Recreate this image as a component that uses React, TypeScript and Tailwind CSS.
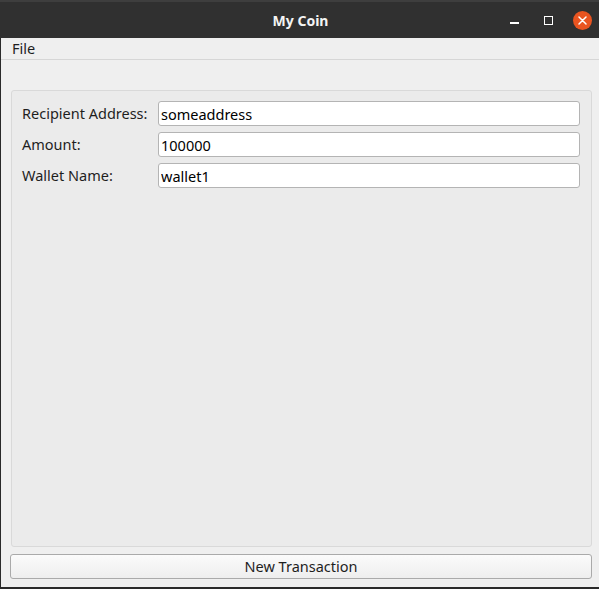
import React from 'react';

const font = { fontFamily: '"Noto Sans", "DejaVu Sans", sans-serif' };

function Field({ label, value }: { label: string; value: string }) {
  return (
    <div className="flex items-center h-[25px]">
      <span className="w-[136px] text-[14.5px] text-[#1e1e1e] leading-none">{label}</span>
      <input
        readOnly
        value={value}
        className="flex-1 h-[25px] bg-white border border-[#b4b4b4] rounded-[3px] px-[2px] text-[14.5px] text-black outline-none"
        style={font}
      />
    </div>
  );
}

export default function App() {
  return (
    <div className="w-[599px] h-[589px] flex flex-col bg-[#efefef] overflow-hidden" style={font}>
      {/* title bar */}
      <div className="h-[38px] bg-[#303030] border-t-2 border-[#3e3e3e] flex items-center relative shrink-0">
        <span className="absolute left-0 right-0 text-center text-[14px] font-bold text-[#f4f4f4] pl-[2px]">My Coin</span>
        <div className="ml-auto flex items-center h-full relative">
          <div className="w-[9px] h-[2px] bg-white mt-[5px] mr-[25px]" />
          <div className="w-[9px] h-[9px] border-[1.5px] border-white mr-[20px]" />
          <div className="w-[19px] h-[19px] rounded-full bg-[#e95420] flex items-center justify-center mr-[7px]">
            <svg width="9" height="9" viewBox="0 0 9 9">
              <path d="M1 1 L8 8 M8 1 L1 8" stroke="white" strokeWidth="1.5" strokeLinecap="round" />
            </svg>
          </div>
        </div>
      </div>

      <div className="flex-1 flex flex-col border-l border-b-2 border-[#2a2a2a]">
        {/* menu bar */}
        <div className="h-[22px] border-b border-[#d6d6d6] flex items-center pl-[11px] shrink-0">
          <span className="text-[14.5px] text-[#1e1e1e]">File</span>
        </div>

        <div className="flex-1 flex flex-col pl-[9px] pr-[7px] pt-[30px] pb-[8px] gap-[7px]">
          <div className="flex-1 bg-[#ebebeb] border border-[#d9d9d9] rounded-[3px] ml-[1px] pl-[10px] pr-[11px] pt-[10px] flex flex-col gap-[6px]">
            <Field label="Recipient Address:" value="someaddress" />
            <Field label="Amount:" value="100000" />
            <Field label="Wallet Name:" value="wallet1" />
          </div>
          <button
            className="h-[25px] shrink-0 rounded-[3px] border border-[#aaaaaa] bg-gradient-to-b from-[#fbfbfb] to-[#eeeeee] text-[14.5px] text-[#1e1e1e]"
            style={font}
          >
            New Transaction
          </button>
        </div>
      </div>
    </div>
  );
}
